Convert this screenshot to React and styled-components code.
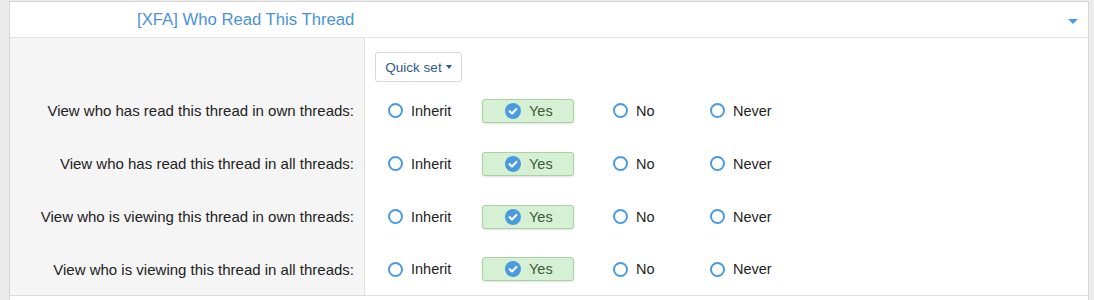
import React from "react";
import styled, { createGlobalStyle } from "styled-components";

const Global = createGlobalStyle`
  html, body { margin: 0; padding: 0; background: #ebebeb; }
  body { font-family: "Liberation Sans", Arial, sans-serif; }
`;

const Panel = styled.div`
  margin: 1px 5px 0 9px;
  border: 1px solid #d6d6d6;
  border-bottom: none;
  background: #fff;
  min-height: 299px;
`;

const Header = styled.div`
  height: 35px;
  display: flex;
  align-items: center;
  justify-content: space-between;
  padding: 0 10px 0 127px;
  border-bottom: 1px solid #e2e2e2;
`;

const Title = styled.h3`
  margin: 0;
  font-weight: normal;
  font-size: 16.7px;
  color: #4a92d8;
  padding-top: 1px;
`;

const Caret = styled.span`
  width: 0;
  height: 0;
  border-left: 5px solid transparent;
  border-right: 5px solid transparent;
  border-top: 5px solid #4a9ae0;
  margin-top: 3px;
`;

const Body = styled.div`
  border-bottom: 1px solid #dcdcdc;
`;

const Row = styled.div`
  display: grid;
  grid-template-columns: 355px 1fr;
  height: ${(p) => p.$h}px;
`;

const LabelCell = styled.div`
  background: #f5f5f5;
  border-right: 1px solid #e0e0e0;
  display: flex;
  align-items: center;
  justify-content: flex-end;
  padding-right: 10px;
  font-size: 15px;
  color: #222;
`;

const ValueCell = styled.div`
  display: flex;
  align-items: ${(p) => (p.$top ? "flex-start" : "center")};
  padding-top: ${(p) => (p.$top ? "14px" : "0")};
  padding-left: ${(p) => p.$pl || 0}px;
`;

const QuickSet = styled.button`
  height: 30px;
  width: 87px;
  box-sizing: border-box;
  background: #fff;
  border: 1px solid #d8d8d8;
  border-radius: 3px;
  color: #2c5a8c;
  font-family: "Liberation Sans", Arial, sans-serif;
  font-size: 13.5px;
  display: flex;
  align-items: center;
  justify-content: center;
  gap: 4px;
  padding: 0;
`;

const SmallCaret = styled.span`
  width: 0;
  height: 0;
  border-left: 3px solid transparent;
  border-right: 3px solid transparent;
  border-top: 4px solid #2c5a8c;
`;

const Option = styled.label`
  box-sizing: border-box;
  width: ${(p) => p.$w}px;
  margin-right: ${(p) => p.$mr || 0}px;
  height: 24px;
  display: flex;
  align-items: center;
  gap: 8px;
  padding-left: 22px;
  border: 1px solid ${(p) => (p.$on ? "#a6d39f" : "transparent")};
  border-radius: 3px;
  background: ${(p) => (p.$on ? "#d5f0d2" : "transparent")};
  box-shadow: ${(p) => (p.$on ? "0 1px 2px rgba(0,0,0,0.12)" : "none")};
  font-size: 14.5px;
  color: ${(p) => (p.$on ? "#3b5c3b" : "#1e1e1e")};
`;

const Ring = styled.span`
  box-sizing: border-box;
  width: 15px;
  height: 15px;
  border-radius: 50%;
  border: 2px solid #4a9ae0;
  background: #fff;
  flex: none;
`;

const Check = () => (
  <svg width="16" height="16" viewBox="0 0 16 16" style={{ flex: "none" }}>
    <circle cx="8" cy="8" r="8" fill="#4a9ae0" />
    <path d="M4.6 8.2 L7 10.5 L11.4 5.9" stroke="#fff" strokeWidth="2.1" fill="none" strokeLinecap="round" strokeLinejoin="round" />
  </svg>
);

const Footer = styled.div`
  height: 10px;
`;

const rows = [
  "View who has read this thread in own threads:",
  "View who has read this thread in all threads:",
  "View who is viewing this thread in own threads:",
  "View who is viewing this thread in all threads:",
];

const opts = [
  { t: "Inherit", w: 117 },
  { t: "Yes", w: 92, mr: 16, on: true },
  { t: "No", w: 97 },
  { t: "Never", w: 120 },
];

export default function App() {
  return (
    <>
      <Global />
      <Panel>
        <Header>
          <Title>[XFA] Who Read This Thread</Title>
          <Caret />
        </Header>
        <Body>
          <Row $h={46}>
            <LabelCell />
            <ValueCell $top $pl={10}>
              <QuickSet>
                Quick set <SmallCaret />
              </QuickSet>
            </ValueCell>
          </Row>
          {rows.map((r, i) => (
            <Row key={i} $h={i === 3 ? 52 : 53}>
              <LabelCell>{r}</LabelCell>
              <ValueCell>
                {opts.map((o) => (
                  <Option key={o.t} $w={o.w} $mr={o.mr} $on={o.on}>
                    {o.on ? <Check /> : <Ring />}
                    {o.t}
                  </Option>
                ))}
              </ValueCell>
            </Row>
          ))}
        </Body>
        <Footer />
      </Panel>
    </>
  );
}
